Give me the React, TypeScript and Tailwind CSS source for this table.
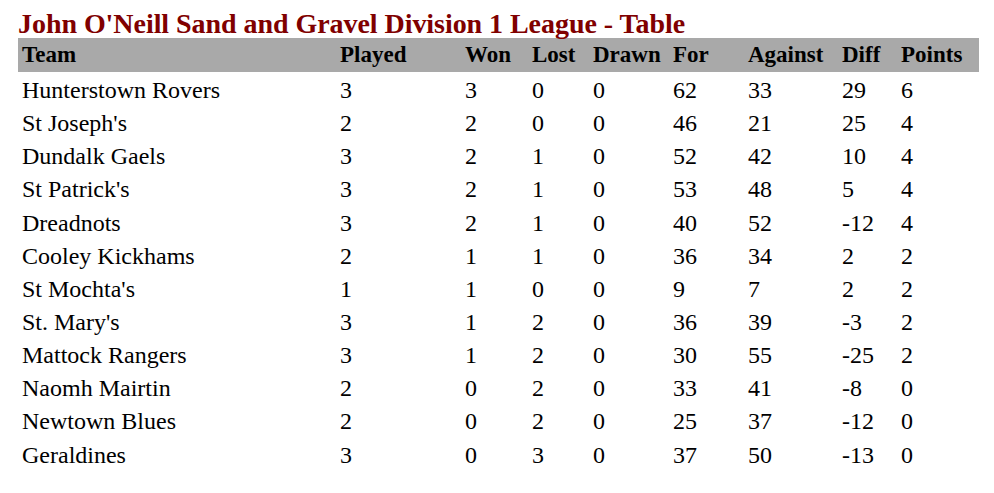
const rows: (string | number)[][] = [
  ["Hunterstown Rovers", 3, 3, 0, 0, 62, 33, 29, 6],
  ["St Joseph's", 2, 2, 0, 0, 46, 21, 25, 4],
  ["Dundalk Gaels", 3, 2, 1, 0, 52, 42, 10, 4],
  ["St Patrick's", 3, 2, 1, 0, 53, 48, 5, 4],
  ["Dreadnots", 3, 2, 1, 0, 40, 52, -12, 4],
  ["Cooley Kickhams", 2, 1, 1, 0, 36, 34, 2, 2],
  ["St Mochta's", 1, 1, 0, 0, 9, 7, 2, 2],
  ["St. Mary's", 3, 1, 2, 0, 36, 39, -3, 2],
  ["Mattock Rangers", 3, 1, 2, 0, 30, 55, -25, 2],
  ["Naomh Mairtin", 2, 0, 2, 0, 33, 41, -8, 0],
  ["Newtown Blues", 2, 0, 2, 0, 25, 37, -12, 0],
  ["Geraldines", 3, 0, 3, 0, 37, 50, -13, 0],
];

const headers = ["Team", "Played", "Won", "Lost", "Drawn", "For", "Against", "Diff", "Points"];

const cols = "grid grid-cols-[318px_125px_67px_61px_80px_75px_94px_59px_82px]";

export default function App() {
  return (
    <div className="pl-[18px] pt-[9px] font-['Liberation_Serif',serif] text-black bg-white min-h-screen">
      <h1 className="text-[28px] leading-[29px] font-bold text-[#800000] whitespace-nowrap tracking-[-0.05px]">
        John O'Neill Sand and Gravel Division 1 League - Table
      </h1>
      <div className="w-[961px]">
        <div className={`${cols} bg-[#a9a9a9] h-[34px] items-center font-bold text-[23px] whitespace-nowrap`}>
          {headers.map((h) => (
            <div key={h} className="pl-[4px]">{h}</div>
          ))}
        </div>
        {rows.map((r) => (
          <div key={r[0] as string} className={`${cols} h-[33.15px] items-center text-[24px] whitespace-nowrap`}>
            {r.map((c, i) => (
              <div key={i} className="pl-[4px]">{c}</div>
            ))}
          </div>
        ))}
      </div>
    </div>
  );
}
